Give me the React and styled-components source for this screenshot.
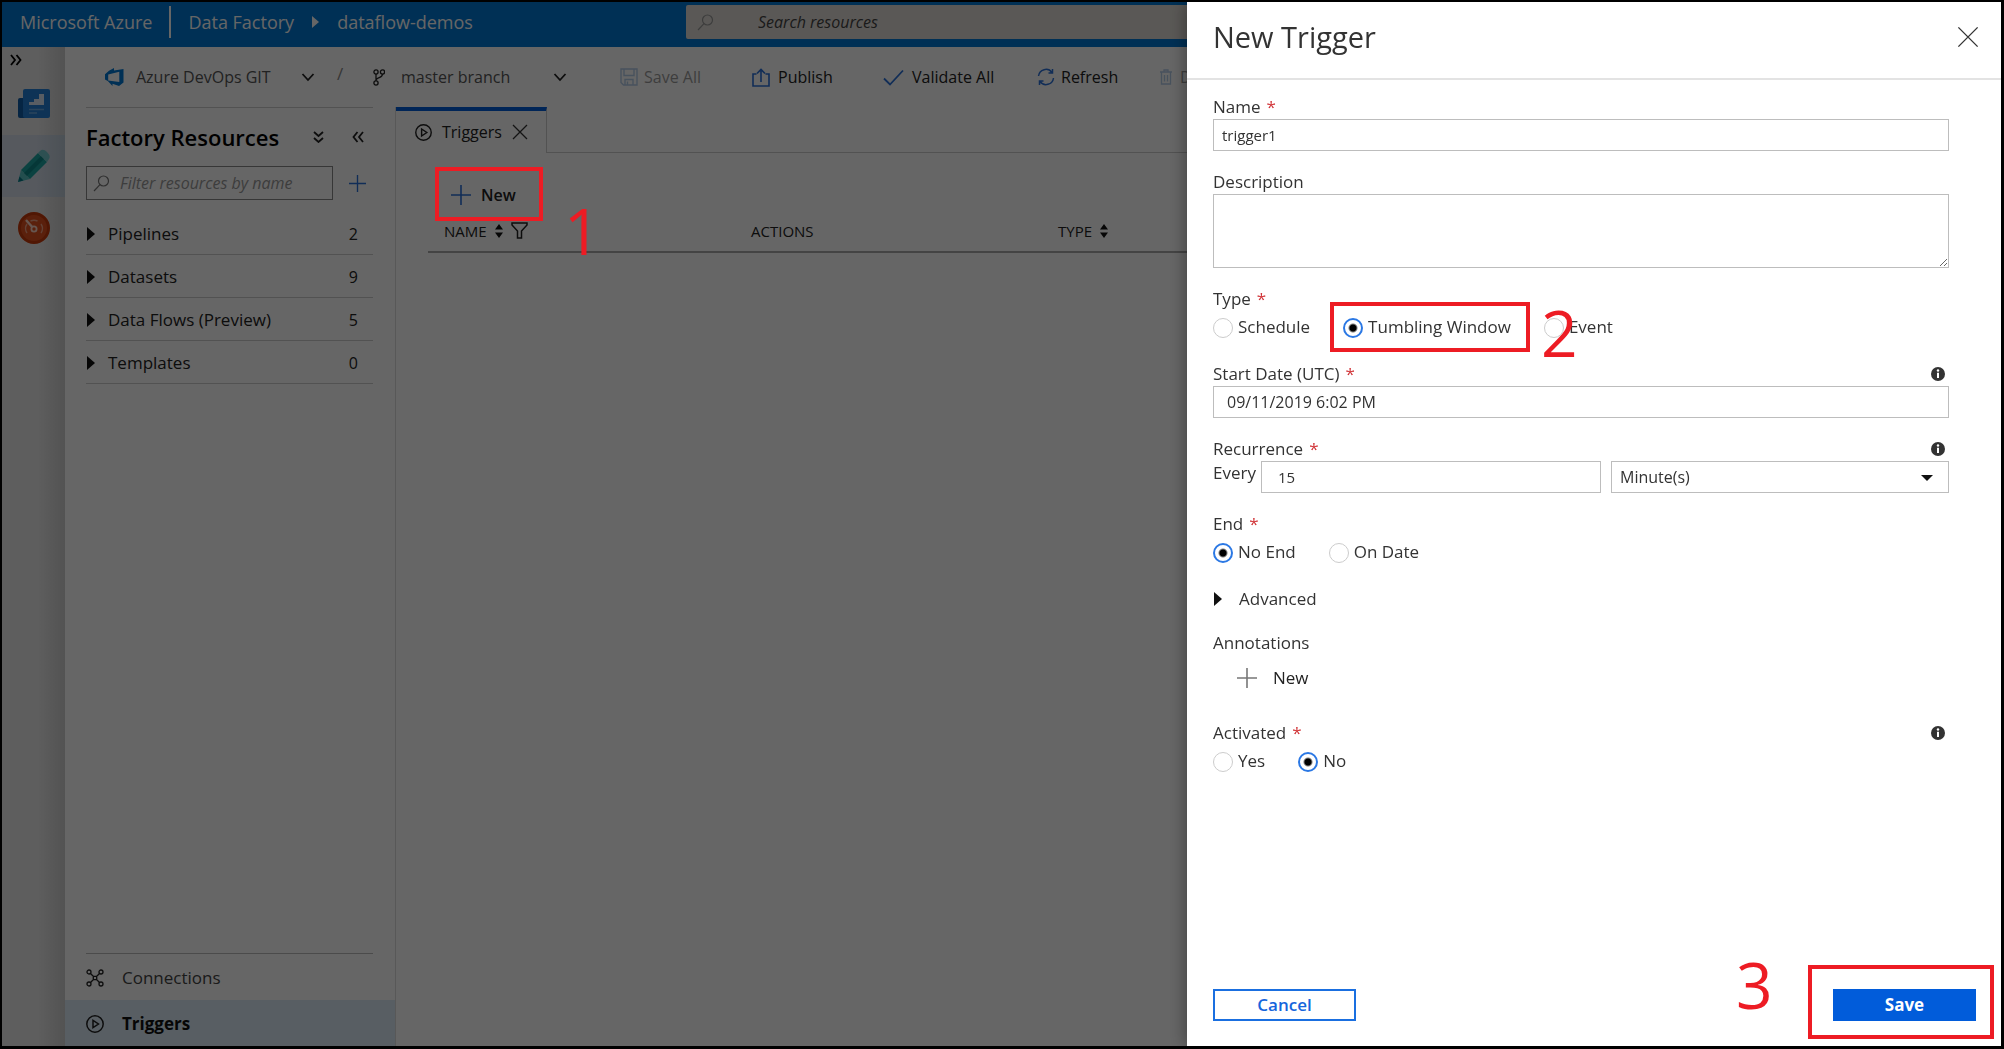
import React, { useState } from "react";
import styled, { createGlobalStyle, css } from "styled-components";

const GlobalStyle = createGlobalStyle`
  *, *::before, *::after { box-sizing: border-box; }
  body {
    margin: 0;
    background: #fff;
    color: #222;
    font-family: "Open Sans", "Noto Sans", sans-serif;
    font-size: 16px;
    line-height: 24px;
  }
  button, input, textarea, select { font: inherit; color: inherit; }
  svg { display: block; flex: none; }
`;

/* ---------- shell ---------- */

const Frame = styled.div`
  display: flex;
  flex-direction: column;
  height: 100vh;
  border: 2px solid #000;
  border-width: 2px 3px 3px 2px;
  overflow: hidden;
`;

const TopBar = styled.header`
  display: flex;
  align-items: center;
  flex: none;
  height: 45px;
  background: #0078d4;
  color: #fff;
  font-size: 18px;
`;

const Brand = styled.div`
  display: flex;
  align-items: center;
  flex: none;
  width: 684px;
  height: 45px;
  padding: 0 0 5px 18px;
  white-space: nowrap;
`;

const BrandRule = styled.span`
  width: 2px;
  height: 32px;
  margin: 0 17px;
  background: #fff;
`;

const Crumbs = styled.nav`
  display: flex;
  align-items: center;
  gap: 18px;
`;

const PlainLink = styled.a`
  color: inherit;
  text-decoration: none;
`;

const TopSearch = styled.label`
  display: flex;
  align-items: center;
  gap: 44px;
  flex: 1;
  height: 34px;
  margin: 0 200px 5px 0;
  padding-left: 11px;
  border-radius: 2px;
  background: #e1ddd7;
`;

const SearchInput = styled.input`
  flex: 1;
  min-width: 0;
  padding: 0;
  border: 0;
  outline: 0;
  background: transparent;
  font-size: 16px;
  font-style: italic;
  &::placeholder { color: ${(p) => p.$hint}; opacity: 1; }
`;

const Columns = styled.div`
  display: flex;
  flex: 1;
  min-height: 0;
`;

const Rail = styled.nav`
  display: flex;
  flex-direction: column;
  flex: none;
  width: 63px;
  background: linear-gradient(to right, #ececec 55%, #d8d8d8 85%, #cfcfcf);
`;

const RailToggle = styled.button`
  display: flex;
  align-items: center;
  height: 26px;
  padding: 0 8px;
  border: 0;
  background: transparent;
`;

const RailItem = styled.button`
  display: flex;
  align-items: center;
  justify-content: center;
  height: 62px;
  padding: 0;
  border: 0;
  background: ${(p) => (p.$active ? "linear-gradient(to right, #d6deeb 55%, #bccad6)" : "transparent")};
`;

const Main = styled.div`
  display: flex;
  flex-direction: column;
  flex: 1;
  min-width: 0;
  background: #fff;
`;

/* ---------- command bar ---------- */

const CommandBar = styled.div`
  display: flex;
  flex: none;
  align-items: center;
  height: 60px;
  white-space: nowrap;
`;

const Repo = styled.div`
  display: flex;
  align-items: center;
  flex: none;
  width: 287px;
  height: 60px;
  margin-left: 21px;
  padding-left: 19px;
`;

const PickerButton = styled.button`
  display: flex;
  align-items: center;
  gap: ${(p) => p.$gap || "12px"};
  width: ${(p) => p.$width};
  padding: 0;
  border: 0;
  background: transparent;
  color: #555;
  text-align: left;
`;

const PickerText = styled.span`
  flex: 1;
`;

const Slash = styled.span`
  margin: 0 0 6px 22px;
  color: #888;
  font-size: 17px;
`;

const Commands = styled.div`
  display: flex;
  align-items: center;
  margin-left: 53px;
`;

const Command = styled.button`
  display: flex;
  align-items: center;
  gap: ${(p) => p.$gap || "6px"};
  padding: 0;
  border: 0;
  background: transparent;
  opacity: ${(p) => (p.disabled ? 0.45 : 1)};
  width: ${(p) => p.$width};
`;

/* ---------- resource panel ---------- */

const Work = styled.div`
  display: flex;
  flex: 1;
  min-height: 0;
`;

const Panel = styled.aside`
  display: flex;
  flex-direction: column;
  flex: none;
  width: 331px;
  border-right: 1px solid #ddd;
`;

const PanelInner = styled.div`
  margin: 0 22px 0 21px;
  border-top: 1px solid #ccc;
`;

const PanelHead = styled.div`
  display: flex;
  align-items: center;
  height: 58px;
`;

const PanelTitle = styled.h1`
  flex: 1;
  margin: 0;
  font-size: 22px;
  font-weight: 600;
  line-height: 28px;
  color: #000;
  white-space: nowrap;
`;

const IconButton = styled.button`
  display: flex;
  align-items: center;
  justify-content: center;
  width: ${(p) => p.$width || "48px"};
  height: 32px;
  padding: 0;
  border: 0;
  background: transparent;
`;

const FilterRow = styled.div`
  display: flex;
  align-items: center;
  gap: 8px;
`;

const FilterBox = styled.label`
  display: flex;
  align-items: center;
  gap: 10px;
  width: 248px;
  height: 34px;
  padding-left: 6px;
  border: 1px solid #8a8a8a;
`;

const ResourceList = styled.ul`
  margin: 12px 0 0;
  padding: 0;
  list-style: none;
  font-size: 17px;
`;

const ResourceItem = styled.li`
  display: flex;
  align-items: center;
  gap: 13px;
  height: 43px;
  padding: 2px 15px 0 1px;
  border-bottom: 1px solid #ccc;
  font-weight: 500;
`;

const ResourceName = styled.span`
  flex: 1;
`;

const ResourceCount = styled.span`
  font-size: 16px;
`;

const PanelFoot = styled.div`
  margin-top: auto;
  font-size: 17px;
`;

const FootRule = styled.div`
  margin: 0 22px 0 21px;
  border-top: 1px solid #bbb;
`;

const FootItem = styled.a`
  display: flex;
  align-items: center;
  gap: 18px;
  height: 46px;
  padding: 2px 0 0 21px;
  color: ${(p) => (p.$active ? "#111" : "#444")};
  background: ${(p) => (p.$active ? "#dcecf8" : "transparent")};
  font-weight: ${(p) => (p.$active ? 700 : 400)};
  text-decoration: none;
`;

/* ---------- tab content ---------- */

const Content = styled.main`
  flex: 1;
  min-width: 0;
`;

const TabStrip = styled.div`
  display: flex;
  height: 46px;
`;

const Tab = styled.div`
  display: flex;
  align-items: center;
  gap: 10px;
  width: 151px;
  padding-left: 19px;
  border-top: 4px solid #015cda;
  border-right: 1px solid #ccc;
  font-weight: 500;
`;

const TabRest = styled.div`
  flex: 1;
  border-bottom: 1px solid #ccc;
`;

const Anchor = styled.span`
  position: relative;
  display: inline-flex;
`;

const NewSlot = styled.div`
  display: flex;
  align-items: flex-start;
  height: 57px;
  padding: 14px 0 0 39px;
`;

const NewButton = styled.button`
  display: flex;
  align-items: center;
  gap: 10px;
  width: 108px;
  height: 54px;
  padding: 2px 0 0 16px;
  border: 0;
  background: transparent;
  font-weight: 600;
`;

const Grid = styled.table`
  width: calc(100% - 32px);
  margin-left: 32px;
  border-collapse: collapse;
  table-layout: fixed;
`;

const HeadCell = styled.th`
  width: ${(p) => p.$width};
  height: 42px;
  padding: 0 0 0 16px;
  border-bottom: 2px solid #aaa;
  font-size: 15px;
  font-weight: 400;
  text-align: left;
`;

const HeadInner = styled.span`
  display: flex;
  align-items: center;
  gap: 8px;
`;

/* ---------- overlay and call-outs ---------- */

const Backdrop = styled.div`
  position: fixed;
  z-index: 1;
  inset: 2px 3px 3px 2px;
  background: rgba(0, 0, 0, 0.6);
`;

const Callout = styled.span`
  position: absolute;
  z-index: 2;
  inset: ${(p) => p.$inset || "0"};
  border: 4px solid #ed1c24;
  pointer-events: none;
`;

const Step = styled.span`
  position: absolute;
  z-index: 3;
  left: ${(p) => p.$left};
  top: ${(p) => p.$top};
  color: #ed1c24;
  font-size: 64px;
  font-weight: 400;
  line-height: 64px;
  pointer-events: none;
`;

/* ---------- drawer ---------- */

const Drawer = styled.section`
  position: fixed;
  z-index: 2;
  top: 2px;
  right: 3px;
  bottom: 3px;
  display: flex;
  flex-direction: column;
  width: 814px;
  max-width: 100%;
  background: #fff;
  box-shadow: -2px 0 16px rgba(0, 0, 0, 0.35);
  color: #333;
  font-size: 17px;
`;

const DrawerHead = styled.div`
  display: flex;
  align-items: center;
  justify-content: space-between;
  height: 78px;
  padding: 0 22px 6px 26px;
  border-bottom: 2px solid #e3e3e3;
`;

const DrawerTitle = styled.h2`
  margin: 0;
  font-size: 29px;
  font-weight: 400;
  line-height: 40px;
`;

const Form = styled.form`
  display: flex;
  flex-direction: column;
  gap: 19px;
  flex: 1;
  padding: 15px 52px 0 26px;
`;

const Group = styled.div`
  display: flex;
  flex-direction: column;
`;

const LabelRow = styled.div`
  display: flex;
  align-items: center;
  justify-content: space-between;
  height: 24px;
  padding-right: 4px;
`;

const Required = styled.span`
  margin-left: 6px;
  color: #d13438;
`;

const box = css`
  border: 1px solid #bdbdbd;
  border-radius: 0;
  outline: 0;
  background: #fff;
`;

const TextInput = styled.input`
  ${box}
  width: 100%;
  min-width: 0;
  height: 32px;
  padding: 0 ${(p) => p.$pad || "13px"};
  font-size: ${(p) => p.$size || "16px"};
`;

const TextArea = styled.textarea`
  ${box}
  display: block;
  width: 100%;
  height: 74px;
  resize: vertical;
`;

const RadioRow = styled.div`
  display: flex;
  align-items: center;
  gap: 33px;
  height: 32px;
`;

const RadioLabel = styled.label`
  position: relative;
  display: flex;
  align-items: center;
  gap: 5px;
`;

const Radio = styled.input`
  appearance: none;
  width: 20px;
  height: 20px;
  margin: 2px 0 0;
  border: 1px solid #ccc;
  border-radius: 50%;
  background: #fff;
  &:checked {
    border: 2px solid #2b78e4;
    background: radial-gradient(circle, #000 3px, #fff 5px);
  }
`;

const Recur = styled.div`
  display: flex;
  align-items: center;
  gap: 10px;
`;

const Every = styled.label`
  display: flex;
  flex: 1;
  gap: 5px;
`;

const SelectBox = styled.span`
  position: relative;
  display: flex;
  flex: 0 0 338px;
`;

const Select = styled.select`
  ${box}
  appearance: none;
  width: 100%;
  height: 32px;
  padding: 0 8px;
  font-size: 16px;
`;

const SelectCaret = styled.svg`
  position: absolute;
  right: 16px;
  top: 14px;
  pointer-events: none;
`;

const Disclosure = styled.button`
  display: flex;
  align-items: center;
  gap: 17px;
  height: 24px;
  margin-bottom: 1px;
  padding: 0 0 0 1px;
  border: 0;
  background: transparent;
`;

const AddButton = styled.button`
  display: flex;
  align-items: center;
  gap: 16px;
  height: 46px;
  margin-bottom: 1px;
  padding: 0 0 0 24px;
  border: 0;
  background: transparent;
  color: #222;
  font-weight: 500;
`;

const DrawerFoot = styled.div`
  display: flex;
  justify-content: space-between;
  padding: 0 25px 25px 26px;
`;

const ActionButton = styled.button`
  width: 143px;
  height: 32px;
  padding: 0;
  border: 2px solid ${(p) => (p.$primary ? "#015cda" : "#1a6fe0")};
  background: ${(p) => (p.$primary ? "#015cda" : "#fff")};
  color: ${(p) => (p.$primary ? "#fff" : "#1565dc")};
  font-size: 17px;
  font-weight: ${(p) => (p.$primary ? 700 : 600)};
  line-height: 24px;
`;

/* ---------- icons ---------- */

const Line = ({ w = 18, h = w, box: vb = `0 0 ${w} ${h}`, color = "#222", sw = 1.5, d, children }) => (
  <svg width={w} height={h} viewBox={vb} fill="none" stroke={color} strokeWidth={sw} aria-hidden="true">
    {d && <path d={d} />}
    {children}
  </svg>
);

const Plus = ({ size = 20, color = "#2b71d9" }) => (
  <Line w={size} box="0 0 20 20" color={color} sw={1.6} d="M10 0v20M0 10h20" />
);
const Chevron = () => <Line w={14} h={10} color="#222" sw={1.8} d="M1.500 2l5.500 6 5.500-6" />;
const Cross = ({ size = 16, color = "#333", sw = 1.3 }) => (
  <Line w={size} box="0 0 16 16" color={color} sw={sw} d="M1 1l14 14M15 1L1 15" />
);
const Magnifier = ({ color = "#777" }) => (
  <Line w={17} color={color} sw={1.2}><circle cx="10.500" cy="6" r="5" /><path d="M7 9.700L1 16" /></Line>
);
const Triangle = () => (
  <svg width="8" height="14" viewBox="0 0 8 14" aria-hidden="true"><path d="M0 0l8 7-8 7z" fill="#111" /></svg>
);
const PlayCircle = ({ size = 18 }) => (
  <Line w={size} box="0 0 18 18" color="#222" sw={1.5}><circle cx="9" cy="9" r="8.200" /><path d="M7 5.300v7.400l5.500-3.700z" /></Line>
);
const Sort = () => (
  <svg width="8" height="14" viewBox="0 0 8 14" aria-hidden="true"><path d="M4 0l4 5.500H0zM4 14l4-5.500H0z" fill="#111" /></svg>
);
const Info = () => (
  <svg width="14" height="14" viewBox="0 0 14 14" role="img" aria-label="More information">
    <circle cx="7" cy="7" r="7" fill="#333" />
    <circle cx="7" cy="3.500" r="1.200" fill="#fff" />
    <path d="M6 5.700h2v5.300H6z" fill="#fff" />
  </svg>
);

const RepoIcon = () => (
  <svg width="19" height="18" viewBox="0 0 19 18" aria-hidden="true">
    <path fill="#0078d4" fillRule="evenodd" d="M0 6.300L4 2.800 9 0v2.500L18.500 1v13.500L14 18l-6.500-2.300V18L2.800 13 0 11.500zM3.200 6.500v6L14.300 14V3.800z" />
  </svg>
);
const BranchIcon = () => (
  <Line w={12} h={17} color="#222" sw={1.3}>
    <circle cx="3" cy="3" r="2.100" /><circle cx="9.500" cy="3" r="2.100" /><circle cx="3" cy="14" r="2.100" />
    <path d="M3 5v7M9.500 5c0 4-4.500 3-6.300 5.500" />
  </Line>
);
const SaveIcon = () => (
  <Line w={18} color="#5b8fd0" sw={1.4} d="M1 1h16v16H3.500L1 14.500zM4 1v6.500h10V1M5 17v-5.500h8V17M7.500 13.500V17" />
);
const PublishIcon = () => (
  <Line w={18} h={19} color="#2b71d9" sw={1.6} d="M4.500 6H1v12h16V6h-3.500M9 14V1.500M5 5.500l4-4 4 4" />
);
const CheckIcon = () => <Line w={21} h={17} color="#2b71d9" sw={1.8} d="M1 9.500l6 6L20 1.500" />;
const RefreshIcon = () => (
  <Line w={18} color="#2b71d9" sw={1.5} d="M1.500 8a7.500 7.500 0 0 1 13.500-3.500M15.500 1v4h-4M16.500 10A7.500 7.500 0 0 1 3 13.500M2.500 17v-4h4" />
);
const TrashIcon = () => (
  <Line w={12} h={16} color="#5b8fd0" sw={1.3} d="M0 3h12M4 3V1h4v2M1.500 3v12h9V3M4.500 6v6.500M7.500 6v6.500" />
);
const FunnelIcon = () => <Line w={17} h={17} color="#222" sw={1.5} d="M1 1h15v2L10.500 9v7h-4V9L1 3z" />;
const ConnectionsIcon = () => (
  <Line w={18} color="#222" sw={1.3}>
    <circle cx="3" cy="3" r="2" /><circle cx="15" cy="3" r="2" /><circle cx="3" cy="15" r="2" /><circle cx="15" cy="15" r="2" />
    <path d="M4.500 4.500l3 3M13.500 4.500l-3 3M4.500 13.500l3-3M13.500 13.500l-3-3M7.300 7.300h3.400v3.400H7.300z" />
  </Line>
);

const OverviewIcon = () => (
  <svg width="32" height="30" viewBox="0 0 32 30" aria-hidden="true">
    <path d="M0 11q0-2 2-2h6v20H2q-2 0-2-2z" fill="#0f5ca8" />
    <rect x="5" y="0" width="27" height="29" rx="2" fill="#2480d6" />
    <path d="M11 16v-3h5v-3h5V5h5v11z" fill="#dbe9f7" />
    <path d="M11 20.500h15M11 24h8" stroke="#6aaae4" strokeWidth="1.600" />
  </svg>
);
const PencilIcon = () => (
  <svg width="34" height="34" viewBox="0 0 34 34" aria-hidden="true">
    <path d="M1 33l3-12 9 9z" fill="#59c3c3" />
    <path d="M1 33l1.500-5.500 4 4z" fill="#077a88" />
    <path d="M4 21L21 4l9 9-17 17z" fill="#1ca6a2" />
    <path d="M7 24L24 7l3 3-17 17z" fill="#0d8b8a" />
    <path d="M21 4l2-2q3-3 7 1t2 7l-2 3z" fill="#71c8cc" />
  </svg>
);
const GaugeIcon = () => (
  <svg width="32" height="32" viewBox="0 0 32 32" fill="none" aria-hidden="true">
    <circle cx="16" cy="16" r="14.500" fill="#e2521f" stroke="#c93a0a" strokeWidth="3" />
    <g stroke="#ffd8c8" strokeWidth="1.800">
      <path d="M9 12q-3 4.500 0 9M23 12q3 4.500 0 9M12.500 9q3.500-1.500 7 0" stroke="#f3a285" strokeWidth="1.400" />
      <circle cx="16" cy="17" r="2.600" />
      <path d="M14.200 15L8 8" strokeWidth="2.400" />
    </g>
  </svg>
);

/* ---------- page ---------- */

const RESOURCES = [
  ["Pipelines", 2],
  ["Datasets", 9],
  ["Data Flows (Preview)", 5],
  ["Templates", 0],
];

function ResourcePanel() {
  return (
    <Panel>
      <PanelInner>
        <PanelHead>
          <PanelTitle>Factory Resources</PanelTitle>
          <IconButton aria-label="Collapse all">
            <Line w={11} h={12} sw={1.8} d="M1 1l4.500 4L10 1M1 7l4.500 4L10 7" />
          </IconButton>
          <IconButton $width="31px" aria-label="Hide panel">
            <Line w={12} h={12} sw={1.8} d="M5.500 1l-4 5 4 5M11 1L7 6l4 5" />
          </IconButton>
        </PanelHead>
        <FilterRow>
          <FilterBox>
            <Magnifier />
            <SearchInput $hint="#999" placeholder="Filter resources by name" aria-label="Filter resources by name" />
          </FilterBox>
          <IconButton $width="32px" aria-label="Add resource"><Plus size={17} /></IconButton>
        </FilterRow>
        <ResourceList>
          {RESOURCES.map(([name, count]) => (
            <ResourceItem key={name}>
              <Triangle />
              <ResourceName>{name}</ResourceName>
              <ResourceCount>{count}</ResourceCount>
            </ResourceItem>
          ))}
        </ResourceList>
      </PanelInner>
      <PanelFoot>
        <FootRule />
        <FootItem href="#connections"><ConnectionsIcon />Connections</FootItem>
        <FootItem href="#triggers" $active><PlayCircle />Triggers</FootItem>
      </PanelFoot>
    </Panel>
  );
}

function TriggersTab() {
  return (
    <Content>
      <TabStrip>
        <Tab>
          <PlayCircle size={17} />
          Triggers
          <Cross />
        </Tab>
        <TabRest />
      </TabStrip>
      <NewSlot>
        <Anchor>
          <NewButton><Plus />New</NewButton>
          <Callout />
          <Step $left="129px" $top="32px">1</Step>
        </Anchor>
      </NewSlot>
      <Grid>
        <thead>
          <tr>
            <HeadCell $width="307px"><HeadInner>NAME<Sort /><FunnelIcon /></HeadInner></HeadCell>
            <HeadCell $width="307px">ACTIONS</HeadCell>
            <HeadCell><HeadInner>TYPE<Sort /></HeadInner></HeadCell>
          </tr>
        </thead>
      </Grid>
    </Content>
  );
}

function RadioSet({ name, options, value, onChange }) {
  return (
    <RadioRow role="radiogroup" aria-label={name}>
      {options.map(({ label, extra }) => (
        <RadioLabel key={label}>
          <Radio type="radio" name={name} checked={value === label} onChange={() => onChange(label)} />
          {label}
          {extra}
        </RadioLabel>
      ))}
    </RadioRow>
  );
}

function TriggerDrawer() {
  const [type, setType] = useState("Tumbling Window");
  const [end, setEnd] = useState("No End");
  const [active, setActive] = useState("No");

  return (
    <Drawer role="dialog" aria-labelledby="drawer-title">
      <DrawerHead>
        <DrawerTitle id="drawer-title">New Trigger</DrawerTitle>
        <IconButton $width="22px" aria-label="Close"><Cross size={22} sw={1} /></IconButton>
      </DrawerHead>
      <Form>
        <Group>
          <LabelRow><label htmlFor="name">Name<Required>*</Required></label></LabelRow>
          <TextInput id="name" $pad="8px" $size="15px" defaultValue="trigger1" />
        </Group>
        <Group>
          <LabelRow><label htmlFor="description">Description</label></LabelRow>
          <TextArea id="description" />
        </Group>
        <Group>
          <LabelRow><span>Type<Required>*</Required></span></LabelRow>
          <RadioSet
            name="Type"
            value={type}
            onChange={setType}
            options={[
              { label: "Schedule" },
              {
                label: "Tumbling Window",
                extra: (
                  <>
                    <Callout $inset="-13px -19px -13px -13px" />
                    <Step $left="198px" $top="-14px">2</Step>
                  </>
                ),
              },
              { label: "Event" },
            ]}
          />
        </Group>
        <Group>
          <LabelRow><label htmlFor="start">Start Date (UTC)<Required>*</Required></label><Info /></LabelRow>
          <TextInput id="start" defaultValue="09/11/2019 6:02 PM" />
        </Group>
        <Group>
          <LabelRow><span>Recurrence<Required>*</Required></span><Info /></LabelRow>
          <Recur>
            <Every>Every<TextInput $pad="16px" $size="15px" defaultValue="15" /></Every>
            <SelectBox>
              <Select aria-label="Recurrence unit" defaultValue="Minute(s)">
                <option>Minute(s)</option>
                <option>Hour(s)</option>
              </Select>
              <SelectCaret width="12" height="6" viewBox="0 0 12 6" aria-hidden="true"><path d="M0 0h12L6 6z" fill="#111" /></SelectCaret>
            </SelectBox>
          </Recur>
        </Group>
        <Group>
          <LabelRow><span>End<Required>*</Required></span></LabelRow>
          <RadioSet name="End" value={end} onChange={setEnd} options={[{ label: "No End" }, { label: "On Date" }]} />
        </Group>
        <Disclosure type="button" aria-expanded="false"><Triangle />Advanced</Disclosure>
        <Group>
          <LabelRow>Annotations</LabelRow>
          <AddButton type="button"><Plus color="#777" />New</AddButton>
        </Group>
        <Group>
          <LabelRow><span>Activated<Required>*</Required></span><Info /></LabelRow>
          <RadioSet name="Activated" value={active} onChange={setActive} options={[{ label: "Yes" }, { label: "No" }]} />
        </Group>
      </Form>
      <DrawerFoot>
        <ActionButton type="button">Cancel</ActionButton>
        <Anchor>
          <ActionButton type="button" $primary>Save</ActionButton>
          <Callout $inset="-24px -18px -18px -25px" />
          <Step $left="-97px" $top="-36px">3</Step>
        </Anchor>
      </DrawerFoot>
    </Drawer>
  );
}

export default function App() {
  return (
    <>
      <GlobalStyle />
      <Frame>
        <TopBar>
          <Brand>
            <PlainLink href="#home">Microsoft Azure</PlainLink>
            <BrandRule />
            <Crumbs aria-label="Breadcrumb">
              <PlainLink href="#factory">Data Factory</PlainLink>
              <svg width="7" height="12" viewBox="0 0 7 12" aria-hidden="true"><path d="M0 0l7 6-7 6z" fill="#fff" /></svg>
              <PlainLink href="#demos">dataflow-demos</PlainLink>
            </Crumbs>
          </Brand>
          <TopSearch>
            <Magnifier color="#999" />
            <SearchInput $hint="#444" placeholder="Search resources" aria-label="Search resources" />
          </TopSearch>
        </TopBar>
        <Columns>
          <Rail aria-label="Sections">
            <RailToggle aria-label="Expand menu">
              <Line w={12} h={12} sw={1.8} color="#000" d="M1 1l4 5-4 5M6.500 1l4 5-4 5" />
            </RailToggle>
            <RailItem aria-label="Overview"><OverviewIcon /></RailItem>
            <RailItem aria-label="Author" $active><PencilIcon /></RailItem>
            <RailItem aria-label="Monitor"><GaugeIcon /></RailItem>
          </Rail>
          <Main>
            <CommandBar>
              <Repo>
                <PickerButton $width="210px"><RepoIcon /><PickerText>Azure DevOps GIT</PickerText><Chevron /></PickerButton>
                <Slash>/</Slash>
              </Repo>
              <PickerButton $width="194px" $gap="16px"><BranchIcon /><PickerText>master branch</PickerText><Chevron /></PickerButton>
              <Commands>
                <Command $width="132px" disabled><SaveIcon />Save All</Command>
                <Command $width="131px" $gap="8px"><PublishIcon />Publish</Command>
                <Command $width="154px" $gap="8px"><CheckIcon />Validate All</Command>
                <Command $width="123px"><RefreshIcon />Refresh</Command>
                <Command $gap="8px" disabled><TrashIcon />Discard All</Command>
              </Commands>
            </CommandBar>
            <Work>
              <ResourcePanel />
              <TriggersTab />
            </Work>
          </Main>
        </Columns>
      </Frame>
      <Backdrop />
      <TriggerDrawer />
    </>
  );
}
